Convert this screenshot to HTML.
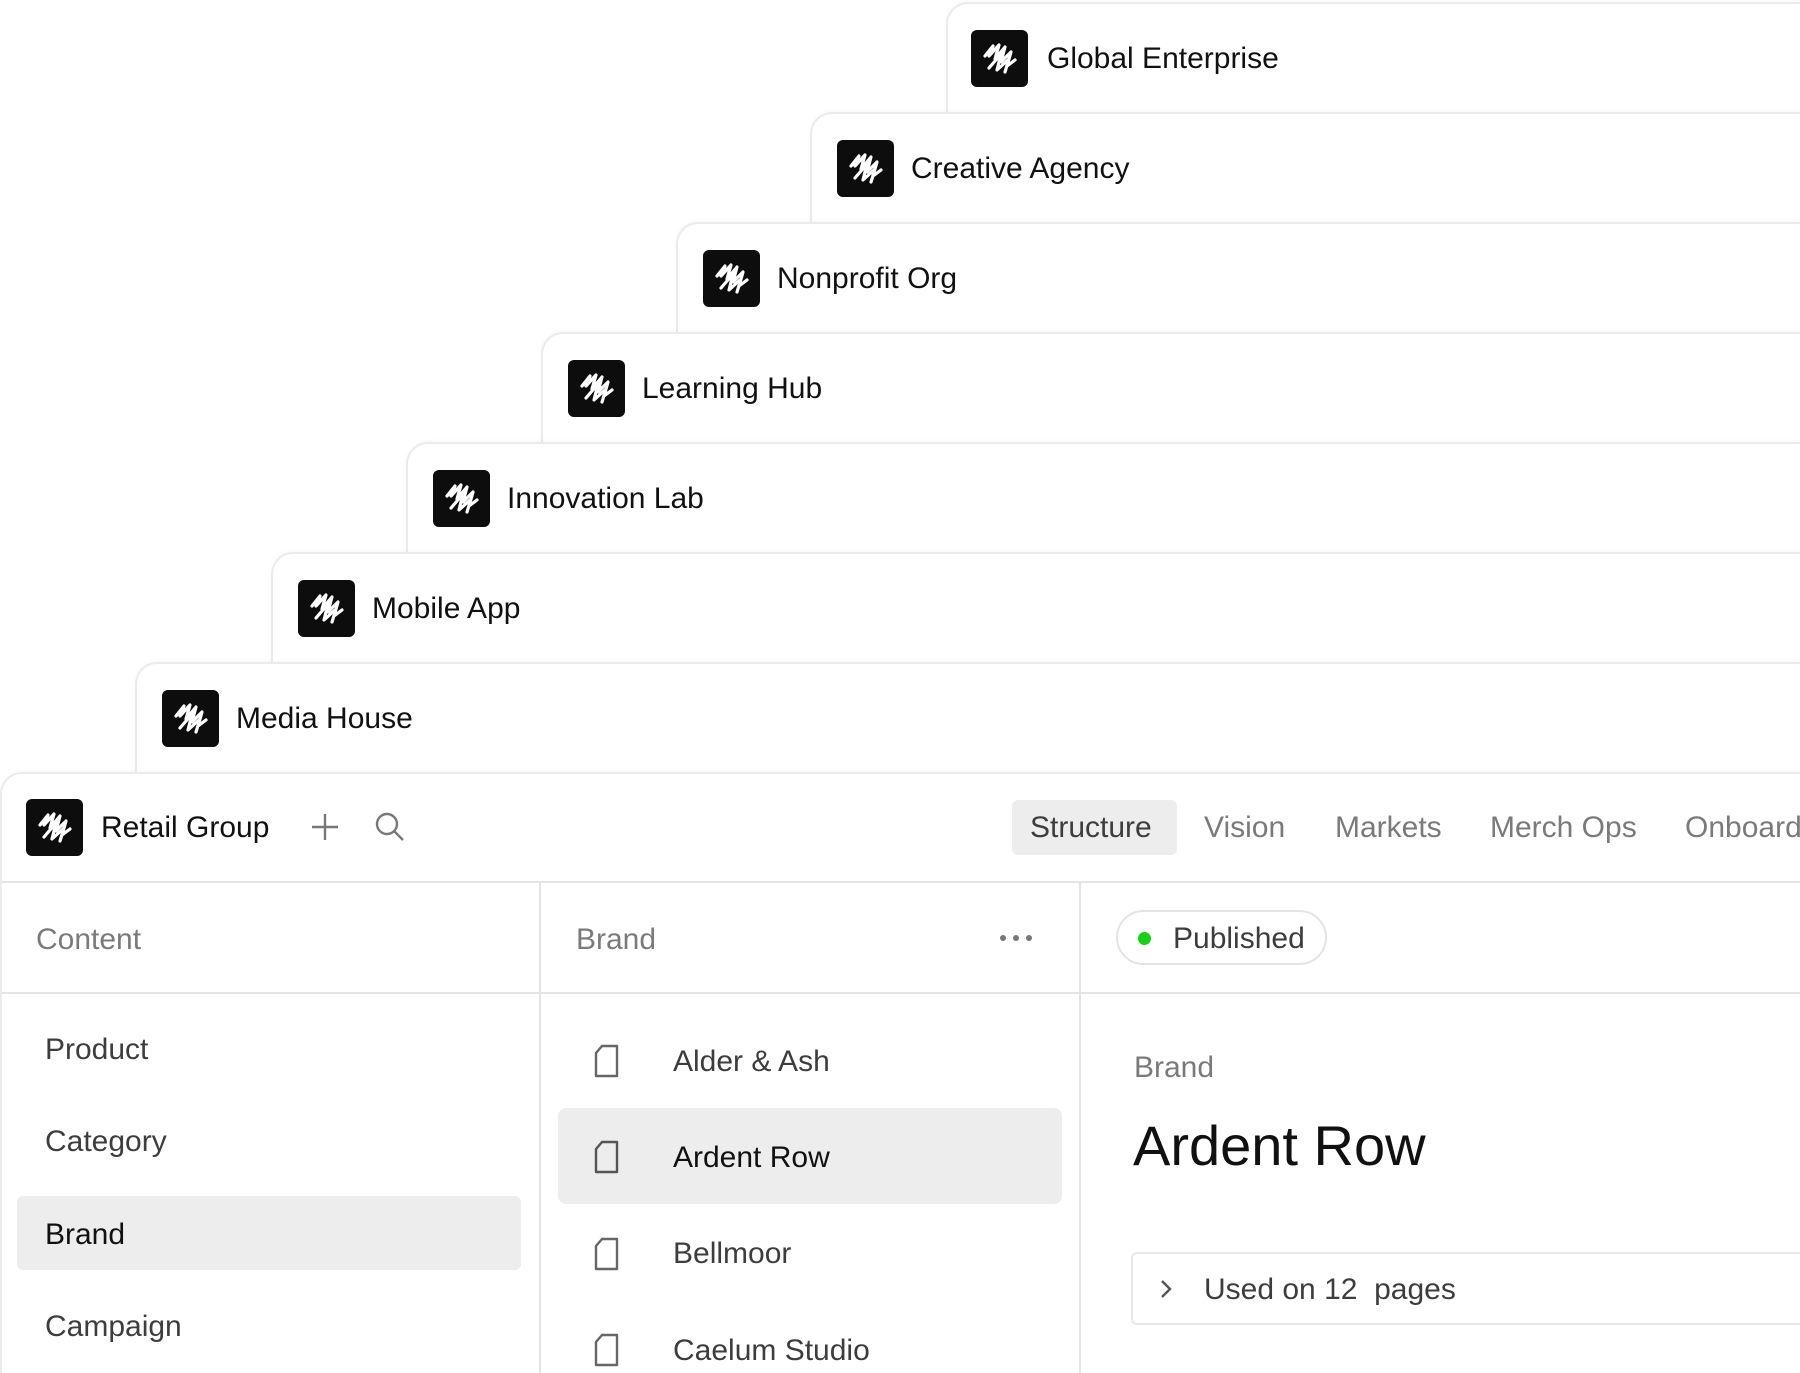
<!DOCTYPE html>
<html><head><meta charset="utf-8"><style>
*{margin:0;padding:0;box-sizing:border-box}
html,body{width:1800px;height:1373px;overflow:hidden;background:#fff}
body{font-family:"Liberation Sans",Arial,sans-serif;color:#111}
#w{position:relative;width:1800px;height:1373px;overflow:hidden}
.card{position:absolute;right:0;height:300px;background:#fff;border:2px solid #ebebeb;border-right:none;border-radius:22px 0 0 0;box-shadow:0 -1px 4px rgba(0,0,0,.03)}
.logo{position:absolute;width:57px;height:57px;background:#0d0d0d;border-radius:6px}
.logo svg{position:absolute;left:0;top:0}
.ct{position:absolute;font-size:30px;color:#111;line-height:1;white-space:nowrap}
.abs{position:absolute;white-space:nowrap;line-height:1}
.g{color:#7a7a7a}
.m{color:#3d3d3d}
</style></head><body><div id="w">
<svg width="0" height="0" style="position:absolute"><defs><g id="lg"><path d="M14 26 L22 16 L18 26 L28 15 L24 29 L34 17 L30 32 L40 22 L36 36 L44 30 M18 38 L30 24 L26 40 L38 29 L34 42" fill="none" stroke="#fff" stroke-width="3.2" stroke-linecap="round" stroke-linejoin="round"/></g></defs></svg>

<div class="card" style="left:946px;top:2px"><div class="logo" style="left:23px;top:26px"><svg width="57" height="57"><use href="#lg"/></svg></div><div class="ct" style="left:99px;top:40px">Global Enterprise</div></div>
<div class="card" style="left:810px;top:112px"><div class="logo" style="left:25px;top:26px"><svg width="57" height="57"><use href="#lg"/></svg></div><div class="ct" style="left:99px;top:40px">Creative Agency</div></div>
<div class="card" style="left:676px;top:222px"><div class="logo" style="left:25px;top:26px"><svg width="57" height="57"><use href="#lg"/></svg></div><div class="ct" style="left:99px;top:40px">Nonprofit Org</div></div>
<div class="card" style="left:541px;top:332px"><div class="logo" style="left:25px;top:26px"><svg width="57" height="57"><use href="#lg"/></svg></div><div class="ct" style="left:99px;top:40px">Learning Hub</div></div>
<div class="card" style="left:406px;top:442px"><div class="logo" style="left:25px;top:26px"><svg width="57" height="57"><use href="#lg"/></svg></div><div class="ct" style="left:99px;top:40px">Innovation Lab</div></div>
<div class="card" style="left:271px;top:552px"><div class="logo" style="left:25px;top:26px"><svg width="57" height="57"><use href="#lg"/></svg></div><div class="ct" style="left:99px;top:40px">Mobile App</div></div>
<div class="card" style="left:135px;top:662px"><div class="logo" style="left:25px;top:26px"><svg width="57" height="57"><use href="#lg"/></svg></div><div class="ct" style="left:99px;top:40px">Media House</div></div>

<div class="card" style="left:0;top:772px;height:601px;border-bottom:none"></div>
<div class="logo" style="left:26px;top:799px"><svg width="57" height="57"><use href="#lg"/></svg></div>
<div class="abs" style="left:101px;top:813px;font-size:30px">Retail Group</div>
<svg class="abs" style="left:309px;top:811px" width="32" height="32"><path d="M16 3V29M3 16H29" stroke="#777" stroke-width="2.4"/></svg>
<svg class="abs" style="left:374px;top:811px" width="32" height="32"><circle cx="13" cy="13" r="10" fill="none" stroke="#777" stroke-width="2.4"/><path d="M20.5 20.5L29 29" stroke="#777" stroke-width="2.4"/></svg>

<div class="abs" style="left:1012px;top:800px;width:165px;height:55px;background:#ededed;border-radius:6px"></div>
<div class="abs m" style="left:1030px;top:813px;font-size:30px">Structure</div>
<div class="abs g" style="left:1204px;top:813px;font-size:30px">Vision</div>
<div class="abs g" style="left:1335px;top:813px;font-size:30px">Markets</div>
<div class="abs g" style="left:1490px;top:813px;font-size:30px">Merch Ops</div>
<div class="abs g" style="left:1685px;top:813px;font-size:30px">Onboard</div>

<div class="abs" style="left:2px;top:881px;width:1798px;height:2px;background:#e4e4e4"></div>
<div class="abs" style="left:2px;top:992px;width:1798px;height:2px;background:#e4e4e4"></div>
<div class="abs" style="left:539px;top:883px;width:2px;height:490px;background:#e4e4e4"></div>
<div class="abs" style="left:1079px;top:883px;width:2px;height:490px;background:#e4e4e4"></div>

<div class="abs g" style="left:36px;top:925px;font-size:30px">Content</div>
<div class="abs g" style="left:576px;top:925px;font-size:30px">Brand</div>
<svg class="abs" style="left:998px;top:932px" width="36" height="12"><circle cx="5" cy="6" r="3" fill="#777"/><circle cx="18" cy="6" r="3" fill="#777"/><circle cx="31" cy="6" r="3" fill="#777"/></svg>
<div class="abs" style="left:1116px;top:910px;width:211px;height:55px;border:2px solid #e4e4e4;border-radius:28px"></div>
<div class="abs" style="left:1138px;top:932px;width:13px;height:13px;border-radius:50%;background:#17d117"></div>
<div class="abs m" style="left:1173px;top:924px;font-size:30px">Published</div>

<div class="abs m" style="left:45px;top:1035px;font-size:30px">Product</div>
<div class="abs m" style="left:45px;top:1127px;font-size:30px">Category</div>
<div class="abs" style="left:17px;top:1196px;width:504px;height:74px;background:#ededed;border-radius:6px"></div>
<div class="abs" style="left:45px;top:1220px;font-size:30px">Brand</div>
<div class="abs m" style="left:45px;top:1312px;font-size:30px">Campaign</div>

<div class="abs" style="left:558px;top:1108px;width:504px;height:96px;background:#ededed;border-radius:8px"></div>
<svg class="abs" style="left:592px;top:1042px" width="30" height="38"><path d="M10 4H25V34H4V11Z" fill="none" stroke="#666" stroke-width="2.4" stroke-linejoin="round"/></svg>
<div class="abs m" style="left:673px;top:1047px;font-size:30px">Alder &amp; Ash</div>
<svg class="abs" style="left:592px;top:1138px" width="30" height="38"><path d="M10 4H25V34H4V11Z" fill="none" stroke="#555" stroke-width="2.4" stroke-linejoin="round"/></svg>
<div class="abs" style="left:673px;top:1143px;font-size:30px">Ardent Row</div>
<svg class="abs" style="left:592px;top:1235px" width="30" height="38"><path d="M10 4H25V34H4V11Z" fill="none" stroke="#666" stroke-width="2.4" stroke-linejoin="round"/></svg>
<div class="abs m" style="left:673px;top:1239px;font-size:30px">Bellmoor</div>
<svg class="abs" style="left:592px;top:1331px" width="30" height="38"><path d="M10 4H25V34H4V11Z" fill="none" stroke="#666" stroke-width="2.4" stroke-linejoin="round"/></svg>
<div class="abs m" style="left:673px;top:1336px;font-size:30px">Caelum Studio</div>

<div class="abs g" style="left:1134px;top:1053px;font-size:30px">Brand</div>
<div class="abs" style="left:1133px;top:1118px;font-size:56px">Ardent Row</div>
<div class="abs" style="left:1131px;top:1252px;width:669px;height:73px;border:2px solid #e8e8e8;border-right:none;border-radius:6px 0 0 6px"></div>
<svg class="abs" style="left:1158px;top:1278px" width="16" height="22"><path d="M4 3L12 11L4 19" fill="none" stroke="#555" stroke-width="2.4"/></svg>
<div class="abs m" style="left:1204px;top:1275px;font-size:30px">Used on 12&nbsp; pages</div>
</div></body></html>
